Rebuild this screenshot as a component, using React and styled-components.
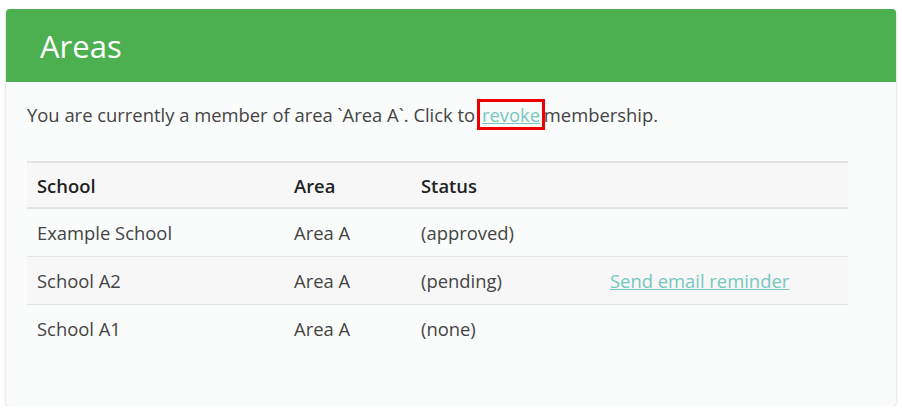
import React from "react";
import styled, { createGlobalStyle } from "styled-components";

const GlobalStyle = createGlobalStyle`
  body {
    margin: 0;
    background: #ffffff;
    font-family: "Open Sans", "Liberation Sans", sans-serif;
  }
`;

const Card = styled.section`
  margin: 9px 6px 0 6px;
  height: 397px;
  box-sizing: border-box;
  background: #fafbfb;
  border-radius: 4px;
  overflow: hidden;
  box-shadow: 0 1px 3px rgba(0, 0, 0, 0.2);
`;

const CardHeader = styled.header`
  background: #4caf50;
  height: 73px;
  padding: 0 34px;
  display: flex;
  align-items: center;
`;

const CardTitle = styled.h2`
  margin: 0;
  color: #ffffff;
  font-size: 31px;
  font-weight: 400;
`;

const CardBody = styled.div`
  padding: 21px 48px 0 21px;
`;

const Intro = styled.p`
  margin: 0 0 34px 0;
  font-size: 18.4px;
  line-height: 24px;
  color: #444;
`;

const Link = styled.a`
  color: #76c7c0;
  text-decoration: underline;
  cursor: pointer;
  ${(p) =>
    p.$highlight &&
    `
    outline: 3px solid #ee0000;
    padding: 0 2px;
    margin: 0 -3px 0 0;
  `}
`;

const Table = styled.table`
  width: 100%;
  table-layout: fixed;
  border-collapse: collapse;
  font-size: 18.4px;
  line-height: 24px;
  color: #444;
`;

const HeadCell = styled.th`
  box-sizing: border-box;
  text-align: left;
  font-weight: 600;
  color: #222;
  padding: 11px 10px 9px 10px;
  background: #f7f7f7;
  border-top: 2px solid #e4e4e4;
  border-bottom: 2px solid #e4e4e4;
  width: ${(p) => p.$width || "auto"};
`;

const Row = styled.tr`
  background: ${(p) => (p.$striped ? "#f7f7f7" : "transparent")};
  border-bottom: 1px solid #e4e4e4;

  &:last-child {
    border-bottom: none;
  }
`;

const Cell = styled.td`
  padding: 12px 10px 11px 10px;
  white-space: nowrap;
`;

const rows = [
  { school: "Example School", area: "Area A", status: "(approved)" },
  { school: "School A2", area: "Area A", status: "(pending)", reminder: true },
  { school: "School A1", area: "Area A", status: "(none)" },
];

export default function App() {
  return (
    <>
      <GlobalStyle />
      <Card>
        <CardHeader>
          <CardTitle>Areas</CardTitle>
        </CardHeader>
        <CardBody>
          <Intro>
            You are currently a member of area `Area A`. Click to{" "}
            <Link $highlight>revoke</Link> membership.
          </Intro>
          <Table>
            <thead>
              <tr>
                <HeadCell $width="257px">School</HeadCell>
                <HeadCell $width="127px">Area</HeadCell>
                <HeadCell $width="189px">Status</HeadCell>
                <HeadCell></HeadCell>
              </tr>
            </thead>
            <tbody>
              {rows.map((r, i) => (
                <Row key={r.school} $striped={i % 2 === 1}>
                  <Cell>{r.school}</Cell>
                  <Cell>{r.area}</Cell>
                  <Cell>{r.status}</Cell>
                  <Cell>{r.reminder && <Link>Send email reminder</Link>}</Cell>
                </Row>
              ))}
            </tbody>
          </Table>
        </CardBody>
      </Card>
    </>
  );
}
